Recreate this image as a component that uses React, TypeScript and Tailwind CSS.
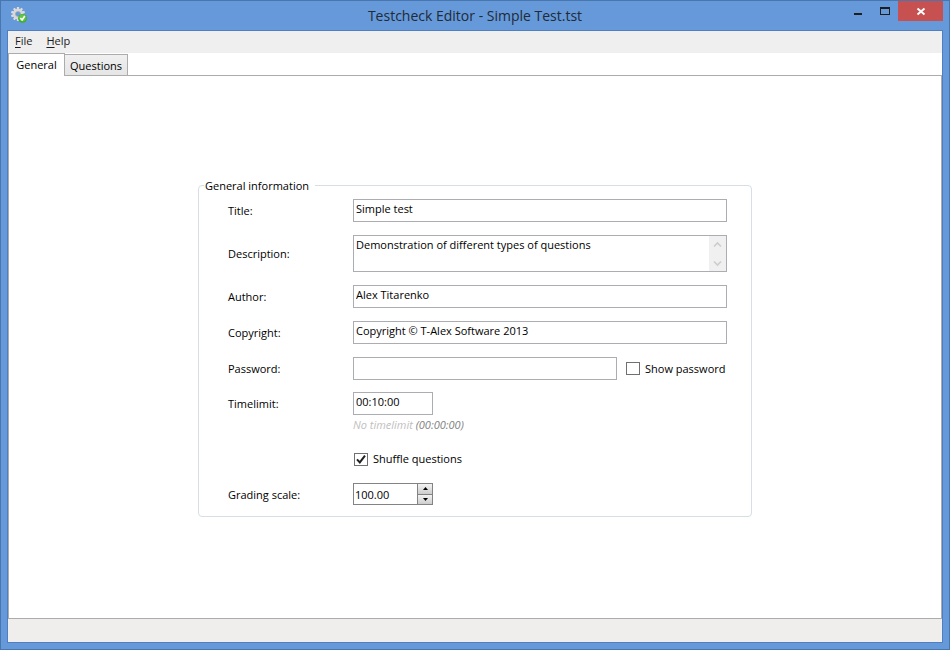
import { useState, type ReactNode } from "react";

const field =
  "block h-[23px] w-full rounded-none border border-[#abadb3] bg-white px-[2px] pb-[4px] text-[11px] leading-4 text-black outline-none focus:border-[#569de5]";

function Row({ id, label, children }: { id: string; label: string; children: ReactNode }) {
  return (
    <div className="grid grid-cols-[125px_1fr] items-center">
      <label htmlFor={id} className="pt-px">{label}</label>
      {children}
    </div>
  );
}

function Check({ id, label, initial }: { id: string; label: string; initial: boolean }) {
  const [on, setOn] = useState(initial);
  return (
    <div className="flex items-center gap-[5px] whitespace-nowrap">
      <span className="grid">
        <input
          id={id}
          type="checkbox"
          checked={on}
          onChange={() => setOn(!on)}
          className="col-start-1 row-start-1 h-[13px] w-[14px] appearance-none border border-[#707070] bg-white"
        />
        {on && (
          <svg viewBox="0 0 14 13" className="pointer-events-none col-start-1 row-start-1 h-[13px] w-[14px]">
            <path d="M3 6.4 L5.8 9.4 L11 2.6" fill="none" stroke="#212121" strokeWidth="2" />
          </svg>
        )}
      </span>
      <label htmlFor={id}>{label}</label>
    </div>
  );
}

function AppIcon() {
  const teeth = [0, 36, 72, 108, 144, 180, 216, 252, 288, 324];
  return (
    <svg viewBox="0 0 16 16" className="h-4 w-4" aria-hidden="true">
      {teeth.map((a) => (
        <rect key={a} x="5.9" y="0" width="2.2" height="3" fill="#dedede" transform={`rotate(${a} 7 7)`} />
      ))}
      <circle cx="7" cy="7" r="4" fill="none" stroke="#d8d8d8" strokeWidth="2.8" />
      <circle cx="7" cy="7" r="2.6" fill="none" stroke="#a9a9a9" strokeWidth="0.6" />
      <circle cx="11.5" cy="11.3" r="4.4" fill="#3fae2a" />
      <circle cx="11.5" cy="10.8" r="3.4" fill="#62c544" />
      <path d="M9.3 11 L11.1 13 L13.8 9" fill="none" stroke="#fff" strokeWidth="1.6" />
    </svg>
  );
}

export default function App() {
  const [tab, setTab] = useState("General");
  const [scale, setScale] = useState(100);
  return (
    <div className="flex min-h-screen flex-col border border-[#4a76ae] bg-[#6599da] px-[6px] pb-[6px] font-['Open_Sans','Noto_Sans',sans-serif] text-[11px] leading-4 text-black">
      <header className="grid h-[29px] shrink-0 grid-cols-[1fr_auto_1fr] items-start">
        <div className="pt-[6px] pl-[4px]">
          <AppIcon />
        </div>
        <h1 className="pt-[5px] text-[14px] leading-5 text-[#222a35]">Testcheck Editor - Simple Test.tst</h1>
        <div className="flex justify-end">
          <button aria-label="Minimize" className="h-5 w-[27px]">
            <svg viewBox="0 0 27 20" className="h-5 w-[27px]">
              <rect x="10" y="12" width="8" height="2" fill="#1e1e1e" />
            </svg>
          </button>
          <button aria-label="Maximize" className="h-5 w-[27px]">
            <svg viewBox="0 0 27 20" className="h-5 w-[27px]">
              <path d="M9 6h10v8h-10z M10 8v5h8v-5z" fill="#1e1e1e" fillRule="evenodd" />
            </svg>
          </button>
          <button aria-label="Close" className="h-5 w-[45px] bg-[#c75050]">
            <svg viewBox="0 0 45 20" className="h-5 w-[45px]">
              <path d="M19.5 7.5 L26.5 13.5 M26.5 7.5 L19.5 13.5" stroke="#fff" strokeWidth="1.9" />
            </svg>
          </button>
        </div>
      </header>

      <div className="flex grow flex-col border border-[#4f7fbf] bg-white">
        <nav className="flex h-[22px] shrink-0 items-center gap-[14px] bg-[#efefef] px-[7px] pb-[2px] text-[#1c1c1c]">
          <button><span className="underline underline-offset-2">F</span>ile</button>
          <button><span className="underline underline-offset-2">H</span>elp</button>
        </nav>

        <div role="tablist" className="-mb-px flex h-[23px] shrink-0 items-end">
          {["General", "Questions"].map((name) => (
            <button
              key={name}
              role="tab"
              aria-selected={tab === name}
              onClick={() => setTab(name)}
              className={
                tab === name
                  ? "z-10 h-[23px] w-[57px] border border-b-0 border-[#acacac] bg-white"
                  : "h-[22px] w-[63px] border border-l-0 border-[#acacac] bg-linear-to-b from-[#f0f0f0] to-[#e5e5e5] pt-px"
              }
            >
              {name}
            </button>
          ))}
        </div>

        <main className="flex grow items-center justify-center border border-[#acacac]">
          <form className="w-[554px]" onSubmit={(e) => e.preventDefault()}>
            <fieldset className="rounded-[4px] border border-[#d5dfe5] pr-6 pb-[11px] pl-[29px]">
              <legend className="-ml-6 pr-[6px] pl-px leading-[17px]">General information</legend>
              <div className="flex flex-col gap-[13px] pt-[5px]">
                <Row id="title" label="Title:">
                  <input id="title" className={field} defaultValue="Simple test" />
                </Row>
                <Row id="description" label="Description:">
                  <div className="flex h-[37px] border border-[#abadb3]">
                    <textarea
                      id="description"
                      className="block h-full grow resize-none overflow-hidden px-[2px] pt-px outline-none"
                      defaultValue="Demonstration of different types of questions"
                    />
                    <div className="flex w-[17px] flex-col justify-between bg-[#f0f0f0] pt-[5px] pb-[4px]">
                      <svg viewBox="0 0 17 7" className="h-[7px] w-[17px]">
                        <path d="M5 5.5 L8.5 2 L12 5.5" fill="none" stroke="#cdcdcd" strokeWidth="1.6" />
                      </svg>
                      <svg viewBox="0 0 17 7" className="h-[7px] w-[17px]">
                        <path d="M5 1.5 L8.5 5 L12 1.5" fill="none" stroke="#cdcdcd" strokeWidth="1.6" />
                      </svg>
                    </div>
                  </div>
                </Row>
                <Row id="author" label="Author:">
                  <input id="author" className={field} defaultValue="Alex Titarenko" />
                </Row>
                <Row id="copyright" label="Copyright:">
                  <input id="copyright" className={field} defaultValue="Copyright © T-Alex Software 2013" />
                </Row>
                <Row id="password" label="Password:">
                  <div className="grid grid-cols-[1fr_101px] items-center gap-[9px]">
                    <input id="password" type="password" className={field} />
                    <Check id="show" label="Show password" initial={false} />
                  </div>
                </Row>
                <div className="-mt-px">
                  <Row id="timelimit" label="Timelimit:">
                    <div className="w-20">
                      <input id="timelimit" className={field} defaultValue="00:10:00" />
                    </div>
                  </Row>
                  <p className="pt-[2px] pl-[125px] text-[#c0c0c0] italic">
                    No timelimit <span className="text-[#808080]">(00:00:00)</span>
                  </p>
                </div>
                <div className="pt-[5px] pl-[126px]">
                  <Check id="shuffle" label="Shuffle questions" initial={true} />
                </div>
                <div className="pt-[3px]">
                  <Row id="scale" label="Grading scale:">
                    <div className="flex h-[22px] w-20 border border-[#838383]">
                      <input
                        id="scale"
                        className="w-0 grow px-px pt-px outline-none"
                        value={scale.toFixed(2)}
                        onChange={(e) => setScale(Number(e.target.value) || 0)}
                      />
                      <div className="flex w-[15px] flex-col border-l border-[#838383]">
                        <button
                          type="button"
                          aria-label="Increase"
                          onClick={() => setScale(scale + 1)}
                          className="flex grow items-center justify-center border-b border-[#838383] bg-linear-to-b from-[#f3f3f3] to-[#cdcdcd]"
                        >
                          <svg viewBox="0 0 5 3" className="h-[3px] w-[5px]"><path d="M0 3 L2.5 0 L5 3z" /></svg>
                        </button>
                        <button
                          type="button"
                          aria-label="Decrease"
                          onClick={() => setScale(scale - 1)}
                          className="flex grow items-center justify-center bg-linear-to-b from-[#f3f3f3] to-[#cdcdcd]"
                        >
                          <svg viewBox="0 0 5 3" className="h-[3px] w-[5px]"><path d="M0 0 L2.5 3 L5 0z" /></svg>
                        </button>
                      </div>
                    </div>
                  </Row>
                </div>
              </div>
            </fieldset>
          </form>
        </main>

        <footer className="h-[23px] shrink-0 bg-[#f0eded]" />
      </div>
    </div>
  );
}
